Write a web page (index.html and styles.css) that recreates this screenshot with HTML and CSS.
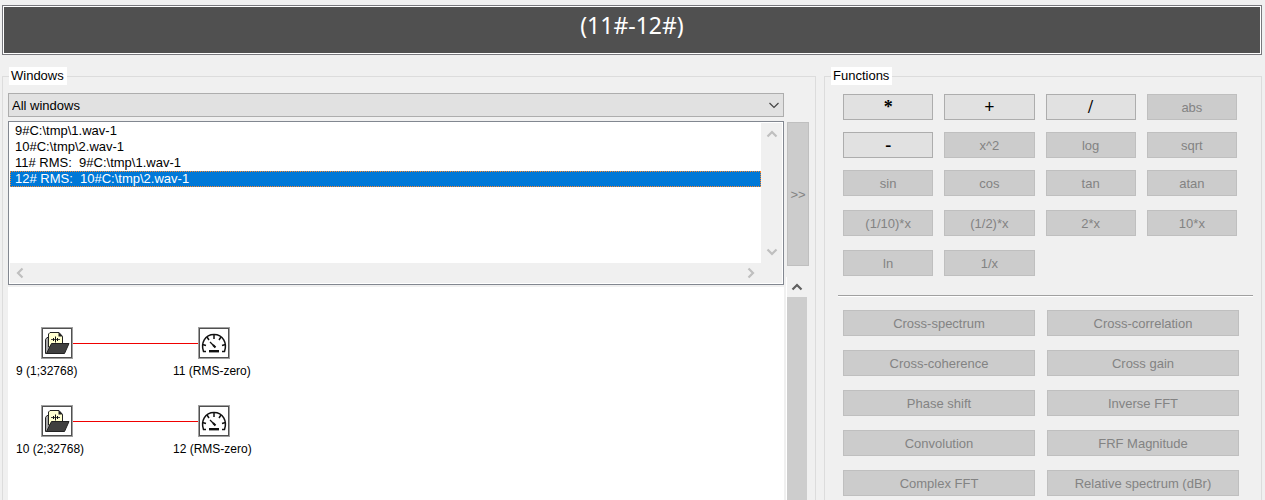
FILE: index.html
```html
<!DOCTYPE html>
<html lang="en">
<head>
  <meta charset="UTF-8">
  <title>Calculator</title>
  <link rel="stylesheet" href="styles.css">
</head>
<body>
  <svg width="0" height="0" class="defs">
    <symbol id="icon-file" viewBox="1 1 30 30">
      <path d="M4.500 26.500V12.500L6 10.500h3V26.500z" fill="#a8a8a8" stroke="#222"/>
      <path d="M7.500 20V7l1.500-1.500h9l3.500 4V20z" fill="#ffffd0" stroke="#222"/>
      <path d="M17.500 5v4.500H22z" fill="#222"/>
      <path d="M10 12.500h9" fill="none" stroke="#444"/>
      <path d="M12.500 11v3M14.500 9.500v6M16.500 11v3" fill="none" stroke="#111"/>
      <path d="M5.500 26.500L10.500 16.500h17.500L23.500 26.500z" fill="#404040" stroke="#222"/>
    </symbol>
    <symbol id="icon-gauge" viewBox="1 1 30 30">
      <path d="M8 24.500H5.500C2.500 16 7 7.500 16 7.500s13.500 8.500 10.500 17H24" fill="none" stroke="#111" stroke-width="1.500"/>
      <path d="M16 8v4M9 10l2 3M23 10l-2 3M4.500 17.500l3.500 1M27.500 17.500l-3.500 1" fill="none" stroke="#111" stroke-width="1.500"/>
      <path d="M12 15l5 5" stroke="#111" stroke-width="1.200"/>
      <path d="M15 18l2.500 2.500" stroke="#111" stroke-width="2"/>
      <path d="M11 24.200h10" stroke="#111" stroke-width="2.400"/>
    </symbol>
    <symbol id="icon-up" viewBox="0 0 12 8">
      <path d="M1.500 6.500L6 2l4.500 4.500" fill="none" stroke="currentColor" stroke-width="2.200"/>
    </symbol>
  </svg>

  <header class="expression">
    <h1>(11#-12#)</h1>
  </header>

  <main class="panels">
    <fieldset class="panel windows">
      <legend>Windows</legend>
      <div class="combo">
        <select aria-label="Windows filter">
          <option>All windows</option>
        </select>
        <svg class="combo-arrow" viewBox="0 0 12 8"><path d="M1.500 2L6 6.500 10.500 2" fill="none" stroke="#444" stroke-width="1.200"/></svg>
      </div>

      <div class="work">
        <div class="work-main">
          <div class="listbox">
            <ul class="items" role="listbox" aria-label="Windows" tabindex="0">
              <li role="option">9#C:\tmp\1.wav-1</li>
              <li role="option">10#C:\tmp\2.wav-1</li>
              <li role="option">11# RMS:&nbsp; 9#C:\tmp\1.wav-1</li>
              <li role="option" aria-selected="true" class="selected">12# RMS:&nbsp; 10#C:\tmp\2.wav-1</li>
            </ul>
            <div class="vscroll">
              <svg class="arrow"><use href="#icon-up"/></svg>
              <svg class="arrow down"><use href="#icon-up"/></svg>
            </div>
            <div class="hscroll">
              <svg class="arrow left"><use href="#icon-up"/></svg>
              <svg class="arrow right"><use href="#icon-up"/></svg>
            </div>
          </div>

          <div class="canvas">
            <div class="link row-1"></div>
            <div class="link row-2"></div>
            <div class="node source row-1"><svg><use href="#icon-file"/></svg><span>9 (1;32768)</span></div>
            <div class="node result row-1"><svg><use href="#icon-gauge"/></svg><span>11 (RMS-zero)</span></div>
            <div class="node source row-2"><svg><use href="#icon-file"/></svg><span>10 (2;32768)</span></div>
            <div class="node result row-2"><svg><use href="#icon-gauge"/></svg><span>12 (RMS-zero)</span></div>
          </div>
        </div>

        <div class="work-side">
          <button class="btn move" disabled>&gt;&gt;</button>
          <div class="scrollbar">
            <svg class="arrow"><use href="#icon-up"/></svg>
            <div class="thumb"></div>
          </div>
        </div>
      </div>
    </fieldset>

    <fieldset class="panel functions">
      <legend>Functions</legend>
      <div class="ops">
        <button class="btn sign">*</button>
        <button class="btn sign">+</button>
        <button class="btn sign">/</button>
        <button class="btn" disabled>abs</button>
        <button class="btn sign">-</button>
        <button class="btn" disabled>x^2</button>
        <button class="btn" disabled>log</button>
        <button class="btn" disabled>sqrt</button>
        <button class="btn" disabled>sin</button>
        <button class="btn" disabled>cos</button>
        <button class="btn" disabled>tan</button>
        <button class="btn" disabled>atan</button>
      </div>
      <div class="ops scale">
        <button class="btn" disabled>(1/10)*x</button>
        <button class="btn" disabled>(1/2)*x</button>
        <button class="btn" disabled>2*x</button>
        <button class="btn" disabled>10*x</button>
        <button class="btn" disabled>ln</button>
        <button class="btn" disabled>1/x</button>
      </div>
      <hr>
      <div class="transforms">
        <button class="btn" disabled>Cross-spectrum</button>
        <button class="btn" disabled>Cross-correlation</button>
        <button class="btn" disabled>Cross-coherence</button>
        <button class="btn" disabled>Cross gain</button>
        <button class="btn" disabled>Phase shift</button>
        <button class="btn" disabled>Inverse FFT</button>
        <button class="btn" disabled>Convolution</button>
        <button class="btn" disabled>FRF Magnitude</button>
        <button class="btn" disabled>Complex FFT</button>
        <button class="btn" disabled>Relative spectrum (dBr)</button>
      </div>
    </fieldset>
  </main>
</body>
</html>
```
FILE: styles.css
```css
* {
  box-sizing: border-box;
}
body {
  display: flex;
  flex-direction: column;
  height: 100vh;
  margin: 0;
  overflow: hidden;
  background: #f0f0f0;
  color: #000;
  font-family: "Liberation Sans", Arial, sans-serif;
  font-size: 13px;
}
svg {
  display: block;
}
.defs {
  position: absolute;
}

/* expression display */
.expression {
  height: 50px;
  margin: 5px 3px 0 2px;
  padding: 1px;
  border: 1px solid #78787d;
  background: #505050;
  box-shadow: inset 0 0 0 1px #fff;
}
.expression h1 {
  margin: 0;
  color: #fff;
  font: 23px/36px "Noto Sans", "Open Sans", sans-serif;
  text-align: center;
}

/* panels */
.panels {
  display: flex;
  flex: 1;
  gap: 8px;
  min-height: 0;
  padding: 12px 3px 0 2px;
}
.panel {
  display: flex;
  flex-direction: column;
  min-width: 0;
  margin: 0;
  border: 1px solid #dcdcdc;
  border-bottom: 0;
}
.panel legend {
  padding: 0 3px 0 2px;
  background: #fff;
  line-height: 18px;
}
.windows {
  flex: 1;
  padding: 8px 6px 0 5px;
}
.functions {
  width: 438px;
  padding: 9px 8px 0 13px;
}
.windows legend {
  margin-left: 1px;
}
.functions legend {
  margin-left: -7px;
}

/* windows filter */
.combo {
  position: relative;
  margin-right: 25px;
}
.combo select {
  display: block;
  width: 100%;
  height: 24px;
  padding: 0 3px;
  border: 1px solid #adadad;
  border-radius: 0;
  background: #e1e1e1;
  color: #000;
  font: inherit;
  appearance: none;
}
.combo-arrow {
  position: absolute;
  top: 8px;
  right: 4px;
  width: 12px;
  height: 8px;
}

.work {
  display: flex;
  flex: 1;
  gap: 3px;
  min-height: 0;
  margin-top: 4px;
}
.work-main {
  display: flex;
  flex: 1;
  flex-direction: column;
  gap: 2px;
}
.work-side {
  display: flex;
  flex-direction: column;
  width: 22px;
  padding-top: 1px;
}

/* list of windows */
.listbox {
  display: grid;
  grid-template-columns: 1fr 21px;
  grid-template-rows: 140px 20px;
  padding: 1px;
  border: 1px solid #828790;
  background: #fff;
}
.items {
  margin: 0;
  padding: 0;
  list-style: none;
  outline: none;
}
.items li {
  padding-left: 5px;
  line-height: 16px;
}
.items .selected {
  background: #0078d7;
  color: #fff;
  outline: 1px dotted #ff8728;
  outline-offset: -1px;
}
.vscroll,
.hscroll {
  display: flex;
  align-items: center;
  justify-content: space-between;
  background: #f0f0f0;
  color: #bfbfbf;
}
.vscroll {
  flex-direction: column;
  padding: 7px 0;
}
.hscroll {
  grid-column: 1 / 3;
  padding: 0 25px 0 4px;
}
.arrow {
  width: 12px;
  height: 8px;
}
.down {
  transform: rotate(180deg);
}
.left {
  transform: rotate(-90deg);
}
.right {
  transform: rotate(90deg);
}
.scrollbar {
  display: flex;
  flex: 1;
  flex-direction: column;
  gap: 6px;
  width: 20px;
  margin-top: 11px;
  padding-top: 6px;
  box-shadow: -1px 0 0 #fff;
  color: #606060;
}
.scrollbar .arrow {
  margin-left: 4px;
}
.thumb {
  flex: 1;
  background: #cdcdcd;
}

/* processing graph */
.canvas {
  position: relative;
  flex: 1;
  background: #fff;
  font-size: 12px;
}
.node {
  position: absolute;
  white-space: nowrap;
}
.node svg {
  width: 32px;
  height: 32px;
  margin: 0 0 4px 25px;
  border: 1px solid #a0a0a0;
  box-shadow: inset 0 0 0 1px #505050;
}
.node span {
  line-height: 16px;
}
.source {
  left: 8px;
}
.result {
  left: 165px;
}
.row-1 {
  top: 40px;
}
.row-2 {
  top: 118px;
}
.link {
  position: absolute;
  left: 65px;
  width: 125px;
  height: 1px;
  margin-top: 16px;
  background: #f00000;
}

/* buttons */
.btn {
  height: 26px;
  padding: 0;
  border: 1px solid #adadad;
  border-radius: 0;
  background: #e1e1e1;
  color: #000;
  font: inherit;
}
.btn:disabled {
  border-color: #bfbfbf;
  background: #ccc;
  color: #838383;
}
.btn.move {
  height: 144px;
}
.btn.sign {
  font: bold 18px/22px "Liberation Serif", "Times New Roman", serif;
}
.ops {
  display: grid;
  grid-template-columns: repeat(4, 1fr);
  gap: 12px 11px;
  margin: 0 16px 0 5px;
}
.scale {
  row-gap: 14px;
  margin-top: 14px;
}
hr {
  width: 100%;
  height: 2px;
  margin: 19px 0 13px;
  border: 0;
  border-top: 1px solid #a0a0a0;
  background: #fff;
}
.transforms {
  display: grid;
  grid-template-columns: 1fr 1fr;
  gap: 14px 12px;
  margin: 0 14px 0 5px;
}
```
